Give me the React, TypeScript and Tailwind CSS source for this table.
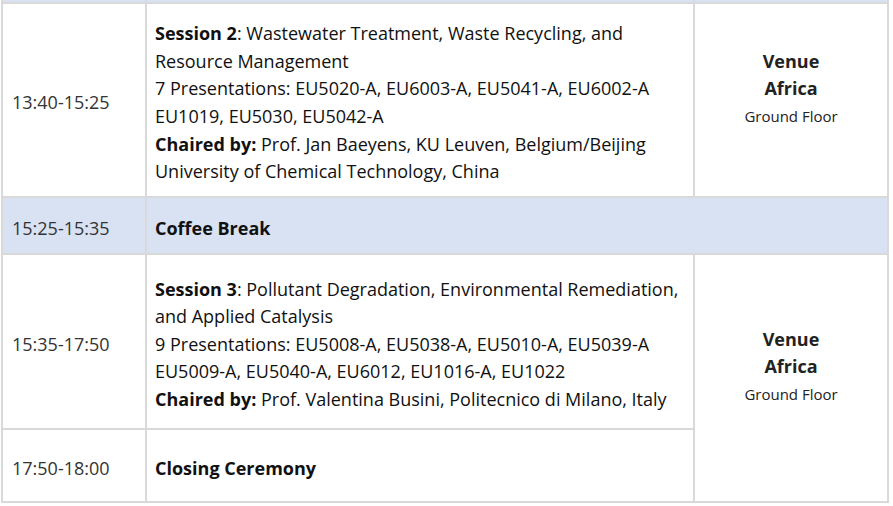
import React from 'react';

const Venue: React.FC = () => (
  <div className="flex flex-col items-center pb-[22px] text-[#222]">
    <span className="font-bold">Venue</span>
    <span className="font-bold">Africa</span>
    <span className="text-[15px]">Ground Floor</span>
  </div>
);

export default function App() {
  const cell = 'border-2 border-[#d9d9d9]';
  const time = `${cell} pl-[9px] pt-[6px] text-[#333] align-middle`;
  const main = `${cell} pl-[8px] pr-2 pt-[6px] text-[#111] align-middle`;

  return (
    <div className="w-[893px] h-[506px] bg-white overflow-hidden pl-px" style={{ fontFamily: '"Open Sans", sans-serif' }}>
      <table className="border-collapse w-[888px] table-fixed text-[18px] leading-[27.6px]">
        <colgroup>
          <col className="w-[144px]" />
          <col className="w-[548px]" />
          <col className="w-[194px]" />
        </colgroup>
        <tbody>
          <tr className="h-[3px] bg-[#d9e2f3]">
            <td className="border-x-2 border-[#d9d9d9] p-0" />
            <td className="border-x-2 border-[#d9d9d9] p-0" />
            <td className="border-x-2 border-[#d9d9d9] p-0" />
          </tr>
          <tr className="h-[194px]">
            <td className={time}>13:40-15:25</td>
            <td className={main}>
              <b>Session 2</b>: Wastewater Treatment, Waste Recycling, and
              <br />
              Resource Management
              <br />
              7 Presentations: EU5020-A, EU6003-A, EU5041-A, EU6002-A
              <br />
              EU1019, EU5030, EU5042-A
              <br />
              <b>Chaired by:</b> Prof. Jan Baeyens, KU Leuven, Belgium/Beijing
              <br />
              University of Chemical Technology, China
            </td>
            <td className={`${cell} align-middle`}>
              <Venue />
            </td>
          </tr>
          <tr className="h-[57px] bg-[#d9e2f3]">
            <td className={time}>15:25-15:35</td>
            <td className={`${main} font-bold`} colSpan={2}>
              Coffee Break
            </td>
          </tr>
          <tr className="h-[175px]">
            <td className={time}>15:35-17:50</td>
            <td className={main}>
              <b>Session 3</b>: Pollutant Degradation, Environmental Remediation,
              <br />
              and Applied Catalysis
              <br />
              9 Presentations: EU5008-A, EU5038-A, EU5010-A, EU5039-A
              <br />
              EU5009-A, EU5040-A, EU6012, EU1016-A, EU1022
              <br />
              <b>Chaired by:</b> Prof. Valentina Busini, Politecnico di Milano, Italy
            </td>
            <td className={`${cell} align-middle`} rowSpan={2}>
              <Venue />
            </td>
          </tr>
          <tr className="h-[73px]">
            <td className={time}>17:50-18:00</td>
            <td className={`${main} font-bold`}>Closing Ceremony</td>
          </tr>
        </tbody>
      </table>
    </div>
  );
}
